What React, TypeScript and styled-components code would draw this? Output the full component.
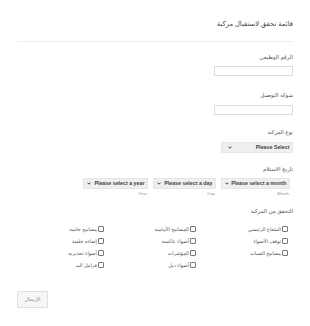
import React from 'react'
import styled, { createGlobalStyle } from 'styled-components'

const GlobalStyle = createGlobalStyle`
  html, body {
    margin: 0;
    padding: 0;
    background: #fff;
  }
  body {
    font-family: 'Liberation Sans', 'DejaVu Sans', Arial, sans-serif;
    color: #555;
  }
`

const Form = styled.div`
  width: 310px;
  height: 326px;
  box-sizing: border-box;
  padding: 0 17px;
  direction: rtl;
  overflow: hidden;
`

const Header = styled.div`
  height: 42px;
  box-sizing: border-box;
  padding-top: 19px;
  border-bottom: 1px solid #efefef;
`

const Title = styled.div`
  font-size: 6.8px;
  line-height: 9px;
  color: #444;
`

const Field = styled.div<{ $top: number }>`
  padding-top: ${(p) => p.$top}px;
`

const Label = styled.div<{ $gap?: number }>`
  font-size: 5.5px;
  line-height: 7px;
  color: #555;
  margin-bottom: ${(p) => p.$gap ?? 5}px;
`

const TextInput = styled.div`
  width: 79px;
  height: 10px;
  box-sizing: border-box;
  border: 1px solid #dcdcdc;
  background: #fff;
`

const SelectBox = styled.div<{ $w: number; $padL?: number }>`
  width: ${(p) => p.$w}px;
  height: 11px;
  box-sizing: border-box;
  background: #efefef;
  border: 1px solid #e6e6e6;
  display: flex;
  align-items: center;
  justify-content: space-between;
  padding: 0 2.5px 0 ${(p) => p.$padL ?? 3}px;
  font-size: 5.3px;
  font-weight: bold;
  color: #444;
  white-space: nowrap;
`

const Chevron = () => (
  <svg width="4" height="3" viewBox="0 0 8 6">
    <path d="M1 1.2 L4 4.4 L7 1.2" fill="none" stroke="#333" strokeWidth="1.8" />
  </svg>
)

const DateRow = styled.div`
  display: flex;
  gap: 5px;
  padding-right: 3px;
`

const DatePart = styled.div`
  display: flex;
  flex-direction: column;
  align-items: flex-start;
`

const SubLabel = styled.div`
  font-size: 4.3px;
  line-height: 6px;
  margin-top: 2px;
  padding-right: 1px;
  color: #9a9a9a;
`

const CheckGrid = styled.div`
  display: grid;
  grid-template-columns: repeat(3, 92px);
  grid-auto-flow: column;
  grid-template-rows: repeat(4, 12px);
`

const CheckItem = styled.div`
  display: flex;
  align-items: center;
  gap: 1px;
  padding-right: 5px;
  font-size: 5px;
  color: #555;
  white-space: nowrap;
`

const Box = styled.span`
  width: 4px;
  height: 4px;
  border: 0.6px solid #777;
  border-radius: 1px;
  flex: none;
`

const Button = styled.div`
  direction: rtl;
  width: 31px;
  height: 17px;
  box-sizing: border-box;
  border: 1px solid #dedede;
  border-radius: 1px;
  background: #f6f6f6;
  display: flex;
  align-items: center;
  justify-content: center;
  font-size: 5px;
  color: #888;
`

const ButtonRow = styled.div`
  direction: ltr;
  padding-top: 20px;
`

const checks: (string | null)[] = [
  'الشعاع الرئيسي',
  'توقف الأضواء',
  'مصابيح الضباب',
  null,
  'المصابيح الأمامية',
  'أضواء عاكسة',
  'المؤشرات',
  'أضواء ذيل',
  'مصابيح جانبية',
  'إضاءة خلفية',
  'أضواء تحذيرية',
  'فرامل اليد',
]

const dates = [
  { text: 'Please select a month', sub: 'Month', w: 69 },
  { text: 'Please select a day', sub: 'Day', w: 63 },
  { text: 'Please select a year', sub: 'Year', w: 65 },
]

const App: React.FC = () => {
  return (
    <>
      <GlobalStyle />
      <Form>
        <Header>
          <Title>قائمة تحقق لاستقبال مركبة</Title>
        </Header>
        <Field $top={12}>
          <Label>الرقم الوظيفي</Label>
          <TextInput />
        </Field>
        <Field $top={16}>
          <Label $gap={5.5}>شوكة التوصيل</Label>
          <TextInput />
        </Field>
        <Field $top={14.5}>
          <Label $gap={5.5}>نوع المركبة</Label>
          <SelectBox $w={72} $padL={6}>
            <span>Please Select</span>
            <Chevron />
          </SelectBox>
        </Field>
        <Field $top={13}>
          <Label>تاريخ الاستلام</Label>
          <DateRow>
            {dates.map((d) => (
              <DatePart key={d.sub}>
                <SelectBox $w={d.w}>
                  <span>{d.text}</span>
                  <Chevron />
                </SelectBox>
                <SubLabel>{d.sub}</SubLabel>
              </DatePart>
            ))}
          </DateRow>
        </Field>
        <Field $top={11}>
          <Label $gap={8}>التحقق من المركبة</Label>
          <CheckGrid>
            {checks.map((c, i) =>
              c ? (
                <CheckItem key={i}>
                  <Box />
                  <span>{c}</span>
                </CheckItem>
              ) : (
                <div key={i} />
              ),
            )}
          </CheckGrid>
        </Field>
        <ButtonRow>
          <Button>الإرسال</Button>
        </ButtonRow>
      </Form>
    </>
  )
}

export default App
